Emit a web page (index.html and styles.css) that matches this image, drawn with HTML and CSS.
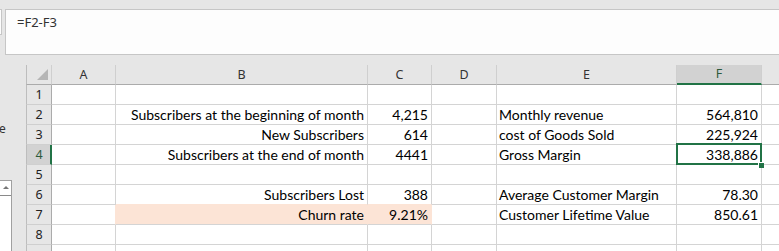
FILE: index.html
```html
<!DOCTYPE html>
<html>
<head>
<meta charset="utf-8">
<link rel="stylesheet" href="styles.css">
</head>
<body>
<div class="topbar">
  <div class="namebox"></div>
  <div class="formula">=F2-F3</div>
</div>
<div class="main">
  <div class="side">
    <div class="side-e">e</div>
    <div class="sidebox"><span class="arrow"></span></div>
  </div>
  <div class="sheet">
    <div class="h corner"><span class="tri"></span></div>
    <div class="h">A</div><div class="h">B</div><div class="h">C</div><div class="h">D</div><div class="h">E</div><div class="h hsel">F</div><div class="h"></div>

    <div class="rh">1</div><div class="c"></div><div class="c"></div><div class="c"></div><div class="c"></div><div class="c"></div><div class="c"></div><div class="c"></div>

    <div class="rh">2</div><div class="c"></div><div class="c r">Subscribers at the beginning of month</div><div class="c r">4,215</div><div class="c"></div><div class="c">Monthly revenue</div><div class="c r">564,810</div><div class="c"></div>

    <div class="rh">3</div><div class="c"></div><div class="c r">New Subscribers</div><div class="c r">614</div><div class="c"></div><div class="c">cost of Goods Sold</div><div class="c r">225,924</div><div class="c"></div>

    <div class="rh rsel">4</div><div class="c"></div><div class="c r">Subscribers at the end of month</div><div class="c r">4441</div><div class="c"></div><div class="c">Gross Margin</div><div class="c r active">338,886</div><div class="c"></div>

    <div class="rh">5</div><div class="c"></div><div class="c"></div><div class="c"></div><div class="c"></div><div class="c"></div><div class="c"></div><div class="c"></div>

    <div class="rh">6</div><div class="c"></div><div class="c r pb">Subscribers Lost</div><div class="c r pb">388</div><div class="c"></div><div class="c">Average Customer Margin</div><div class="c r">78.30</div><div class="c"></div>

    <div class="rh">7</div><div class="c pr"></div><div class="c r peach">Churn rate</div><div class="c r peach">9.21%</div><div class="c"></div><div class="c">Customer Lifetime Value</div><div class="c r">850.61</div><div class="c"></div>

    <div class="rh">8</div><div class="c"></div><div class="c"></div><div class="c"></div><div class="c"></div><div class="c"></div><div class="c"></div><div class="c"></div>

    <div class="rh"></div><div class="c"></div><div class="c"></div><div class="c"></div><div class="c"></div><div class="c"></div><div class="c"></div><div class="c"></div>
  </div>
</div>
</body>
</html>
```
FILE: styles.css
```css
html, body {
  margin: 0;
  padding: 0;
}
body {
  width: 779px;
  height: 251px;
  overflow: hidden;
  background: #e6e6e6;
  font-family: "Noto Sans", "DejaVu Sans", sans-serif;
}
.topbar {
  display: flex;
  height: 65px;
  padding-top: 9px;
  box-sizing: border-box;
  align-items: flex-start;
}
.namebox {
  width: 2px;
  height: 26px;
  box-sizing: border-box;
  background: #fdfdfd;
  border: 1px solid #c6c6c6;
  border-left: none;
}
.formula {
  flex: 1;
  margin-left: 3px;
  height: 46px;
  box-sizing: border-box;
  background: #fdfdfd;
  border: 1px solid #c6c6c6;
  border-right: none;
  padding: 4px 0 0 11px;
  font-size: 13px;
  line-height: 17px;
  color: #333;
}
.main {
  display: flex;
  height: 186px;
  overflow: hidden;
}
.side {
  width: 12px;
  flex: none;
  display: flex;
  flex-direction: column;
  overflow: hidden;
}
.side-e {
  margin-top: 57px;
  margin-left: -1px;
  font-size: 12px;
  line-height: 14px;
  color: #333;
  height: 14px;
}
.sidebox {
  margin-top: 44px;
  flex: 1;
  box-sizing: border-box;
  width: 12px;
  background: #fff;
  border-top: 1px solid #a0a0a0;
  border-right: 1px solid #a0a0a0;
  position: relative;
}
.sidebox::after {
  content: "";
  position: absolute;
  left: 0;
  right: 0;
  top: 14px;
  height: 1px;
  background: #8a8a8a;
}
.arrow {
  position: absolute;
  left: 3px;
  top: 5px;
  width: 0;
  height: 0;
  border-left: 3px solid transparent;
  border-right: 3px solid transparent;
  border-bottom: 3px solid #777;
}
.sheet {
  margin-left: 14px;
  display: grid;
  grid-template-columns: 26px 64px 252px 64px 65px 180px 85px 40px;
  grid-auto-rows: 20px;
  align-self: flex-start;
}
.sheet > div {
  box-sizing: border-box;
  border-right: 1px solid #d4d4d4;
  border-bottom: 1px solid #d4d4d4;
  white-space: nowrap;
  overflow: visible;
}
.h {
  background: #e6e6e6;
  font-size: 12.5px;
  line-height: 19px;
  text-align: center;
  color: #333;
  border-right-color: #cfcfcf !important;
  border-bottom-color: #ababab !important;
}
.corner {
  position: relative;
  border-left: 1px solid #bdbdbd;
}
.tri {
  position: absolute;
  right: 3px;
  bottom: 4px;
  width: 0;
  height: 0;
  border-left: 11px solid transparent;
  border-bottom: 11px solid #b5b5b5;
}
.hsel {
  background: #d2d2d2;
  color: #2c5a3c;
  border-bottom: 2px solid #217346 !important;
  line-height: 18px;
}
.rh {
  background: #e6e6e6;
  font-size: 12.5px;
  line-height: 19px;
  text-align: center;
  color: #222;
  border-left: 1px solid #bdbdbd;
  border-right-color: #ababab !important;
  border-bottom-color: #cfcfcf !important;
}
.rsel {
  background: #d2d2d2;
  color: #2c5a3c;
  border-right: 2px solid #217346 !important;
  padding-left: 1px;
}
.c {
  background: #fff;
  font-family: "Lato", "Liberation Sans", sans-serif;
  font-size: 14px;
  line-height: 19px;
  color: #000;
  padding: 0 2px;
}
.r {
  text-align: right;
  padding-right: 3px;
}
.peach {
  background: #fce4d6;
  border-right-color: #fce4d6 !important;
}
.pb {
  border-bottom-color: #fce4d6 !important;
}
.pr {
  border-right-color: #fce4d6 !important;
}
.active {
  position: relative;
}
.active::before {
  content: "";
  position: absolute;
  top: -2px;
  left: -1px;
  right: -1px;
  bottom: -1px;
  border: 2px solid #217346;
}
.active::after {
  content: "";
  position: absolute;
  right: -3px;
  bottom: -4px;
  width: 5px;
  height: 5px;
  background: #217346;
  border-left: 1px solid #fff;
  border-top: 1px solid #fff;
}
```
